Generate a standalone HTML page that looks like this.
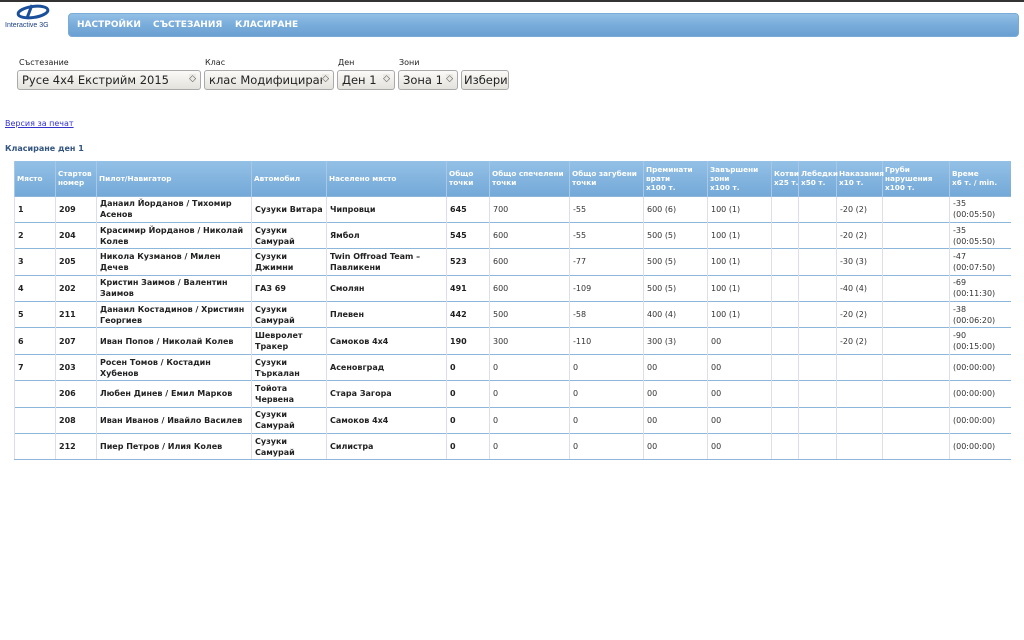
<!DOCTYPE html>
<html><head><meta charset="utf-8"><style>
*{box-sizing:border-box}
body{margin:0;width:1024px;height:640px;background:#fff;font-family:"DejaVu Sans","Liberation Sans",sans-serif;position:relative;overflow:hidden}
.top{position:absolute;left:0;top:0;width:1024px;height:2px;background:#333}
.nav{position:absolute;left:68px;top:13px;width:951px;height:24px;border-radius:4px;background:linear-gradient(#93c0e6,#78acda 50%,#6aa0d2);border:1px solid #7aaad6}
.nav span{position:absolute;top:6px;color:#fff;font-weight:bold;font-size:9px}
.lbl{position:absolute;top:58px;font-size:8px;color:#222}
.sel{position:absolute;top:70px;height:20px;border:1px solid #aaa;border-radius:3px;background:linear-gradient(#fbfaf8,#e4e2dc);font-size:11.5px;padding:2px 4px;color:#222;white-space:nowrap;overflow:hidden}
.sel i{position:absolute;right:4px;top:3px;font-style:normal;font-size:9px;color:#555;background:#ebe9e4}
a{position:absolute;left:5px;top:119px;font-size:8px;color:#33c;text-decoration:underline}
h4{position:absolute;left:5px;top:144px;margin:0;font-size:8px;color:#335580}
table{position:absolute;left:14px;top:161px;border-collapse:collapse;table-layout:fixed;width:996px;font-size:8px}
th{background:linear-gradient(#93c0e6,#74a9d8);color:#fff;font-weight:bold;text-align:left;vertical-align:middle;height:35px;padding:0 2px;font-size:7.3px;border-left:1px solid #a8c8e8;line-height:9px}
td{height:26.4px;padding:0 3px;border-top:1px solid #8db6dc;border-left:1px solid #dde;color:#333;line-height:11px;vertical-align:middle}
tr:last-child td{border-bottom:1px solid #8db6dc}
td.b{font-weight:bold;color:#222}
</style></head><body>
<div class="top"></div>
<svg style="position:absolute;left:3px;top:3px" width="60" height="27"><ellipse cx="30" cy="9" rx="15" ry="5.5" fill="none" stroke="#1a4f9a" stroke-width="3" transform="rotate(-8 30 9)"/><path d="M29 2 L24 15" stroke="#1a4f9a" stroke-width="3"/><text x="2" y="24" font-size="7" fill="#1a3f80" font-family="Liberation Sans">Interactive 3G</text></svg>
<div class="nav"><span style="left:8px">НАСТРОЙКИ</span><span style="left:84px">СЪСТЕЗАНИЯ</span><span style="left:166px">КЛАСИРАНЕ</span></div>
<div class="lbl" style="left:19px">Състезание</div><div class="lbl" style="left:205px">Клас</div><div class="lbl" style="left:338px">Ден</div><div class="lbl" style="left:399px">Зони</div>
<div class="sel" style="left:17px;width:184px">Русе 4x4 Екстрийм 2015<i>◇</i></div>
<div class="sel" style="left:204px;width:130px">клас Модифициран<i>◇</i></div>
<div class="sel" style="left:337px;width:58px">Ден 1<i>◇</i></div>
<div class="sel" style="left:398px;width:60px">Зона 1<i>◇</i></div>
<div class="sel" style="left:461px;width:48px;padding:2px 2px">Избери</div>
<a>Версия за печат</a>
<h4>Класиране ден 1</h4>
<table>
<colgroup><col style="width:41px"><col style="width:41px"><col style="width:155px"><col style="width:75px"><col style="width:120px"><col style="width:43px"><col style="width:80px"><col style="width:74px"><col style="width:64px"><col style="width:64px"><col style="width:27px"><col style="width:38px"><col style="width:46px"><col style="width:67px"><col style="width:61px"></colgroup>
<tr><th>Място</th><th>Стартов номер</th><th>Пилот/Навигатор</th><th>Автомобил</th><th>Населено място</th><th>Общо точки</th><th>Общо спечелени точки</th><th>Общо загубени точки</th><th>Преминати врати<br>x100 т.</th><th>Завършени зони<br>x100 т.</th><th>Котви<br>x25&nbsp;т.</th><th>Лебедки x50 т.</th><th>Наказания x10 т.</th><th>Груби нарушения x100 т.</th><th>Време<br>x6 т. / min.</th></tr>
<tr><td class="b">1</td><td class="b">209</td><td class="b">Данаил Йорданов / Тихомир Асенов</td><td class="b">Сузуки Витара</td><td class="b">Чипровци</td><td class="b">645</td><td>700</td><td>-55</td><td>600 (6)</td><td>100 (1)</td><td></td><td></td><td>-20 (2)</td><td></td><td>-35<br>(00:05:50)</td></tr>
<tr><td class="b">2</td><td class="b">204</td><td class="b">Красимир Йорданов / Николай Колев</td><td class="b">Сузуки Самурай</td><td class="b">Ямбол</td><td class="b">545</td><td>600</td><td>-55</td><td>500 (5)</td><td>100 (1)</td><td></td><td></td><td>-20 (2)</td><td></td><td>-35<br>(00:05:50)</td></tr>
<tr><td class="b">3</td><td class="b">205</td><td class="b">Никола Кузманов / Милен Дечев</td><td class="b">Сузуки Джимни</td><td class="b">Twin Offroad Team – Павликени</td><td class="b">523</td><td>600</td><td>-77</td><td>500 (5)</td><td>100 (1)</td><td></td><td></td><td>-30 (3)</td><td></td><td>-47<br>(00:07:50)</td></tr>
<tr><td class="b">4</td><td class="b">202</td><td class="b">Кристин Заимов / Валентин Заимов</td><td class="b">ГАЗ 69</td><td class="b">Смолян</td><td class="b">491</td><td>600</td><td>-109</td><td>500 (5)</td><td>100 (1)</td><td></td><td></td><td>-40 (4)</td><td></td><td>-69<br>(00:11:30)</td></tr>
<tr><td class="b">5</td><td class="b">211</td><td class="b">Данаил Костадинов / Християн Георгиев</td><td class="b">Сузуки Самурай</td><td class="b">Плевен</td><td class="b">442</td><td>500</td><td>-58</td><td>400 (4)</td><td>100 (1)</td><td></td><td></td><td>-20 (2)</td><td></td><td>-38<br>(00:06:20)</td></tr>
<tr><td class="b">6</td><td class="b">207</td><td class="b">Иван Попов / Николай Колев</td><td class="b">Шевролет Тракер</td><td class="b">Самоков 4x4</td><td class="b">190</td><td>300</td><td>-110</td><td>300 (3)</td><td>00</td><td></td><td></td><td>-20 (2)</td><td></td><td>-90<br>(00:15:00)</td></tr>
<tr><td class="b">7</td><td class="b">203</td><td class="b">Росен Томов / Костадин Хубенов</td><td class="b">Сузуки Търкалан</td><td class="b">Асеновград</td><td class="b">0</td><td>0</td><td>0</td><td>00</td><td>00</td><td></td><td></td><td></td><td></td><td>(00:00:00)</td></tr>
<tr><td></td><td class="b">206</td><td class="b">Любен Динев / Емил Марков</td><td class="b">Тойота Червена</td><td class="b">Стара Загора</td><td class="b">0</td><td>0</td><td>0</td><td>00</td><td>00</td><td></td><td></td><td></td><td></td><td>(00:00:00)</td></tr>
<tr><td></td><td class="b">208</td><td class="b">Иван Иванов / Ивайло Василев</td><td class="b">Сузуки Самурай</td><td class="b">Самоков 4x4</td><td class="b">0</td><td>0</td><td>0</td><td>00</td><td>00</td><td></td><td></td><td></td><td></td><td>(00:00:00)</td></tr>
<tr><td></td><td class="b">212</td><td class="b">Пиер Петров / Илия Колев</td><td class="b">Сузуки Самурай</td><td class="b">Силистра</td><td class="b">0</td><td>0</td><td>0</td><td>00</td><td>00</td><td></td><td></td><td></td><td></td><td>(00:00:00)</td></tr>
</table>
</body></html>
